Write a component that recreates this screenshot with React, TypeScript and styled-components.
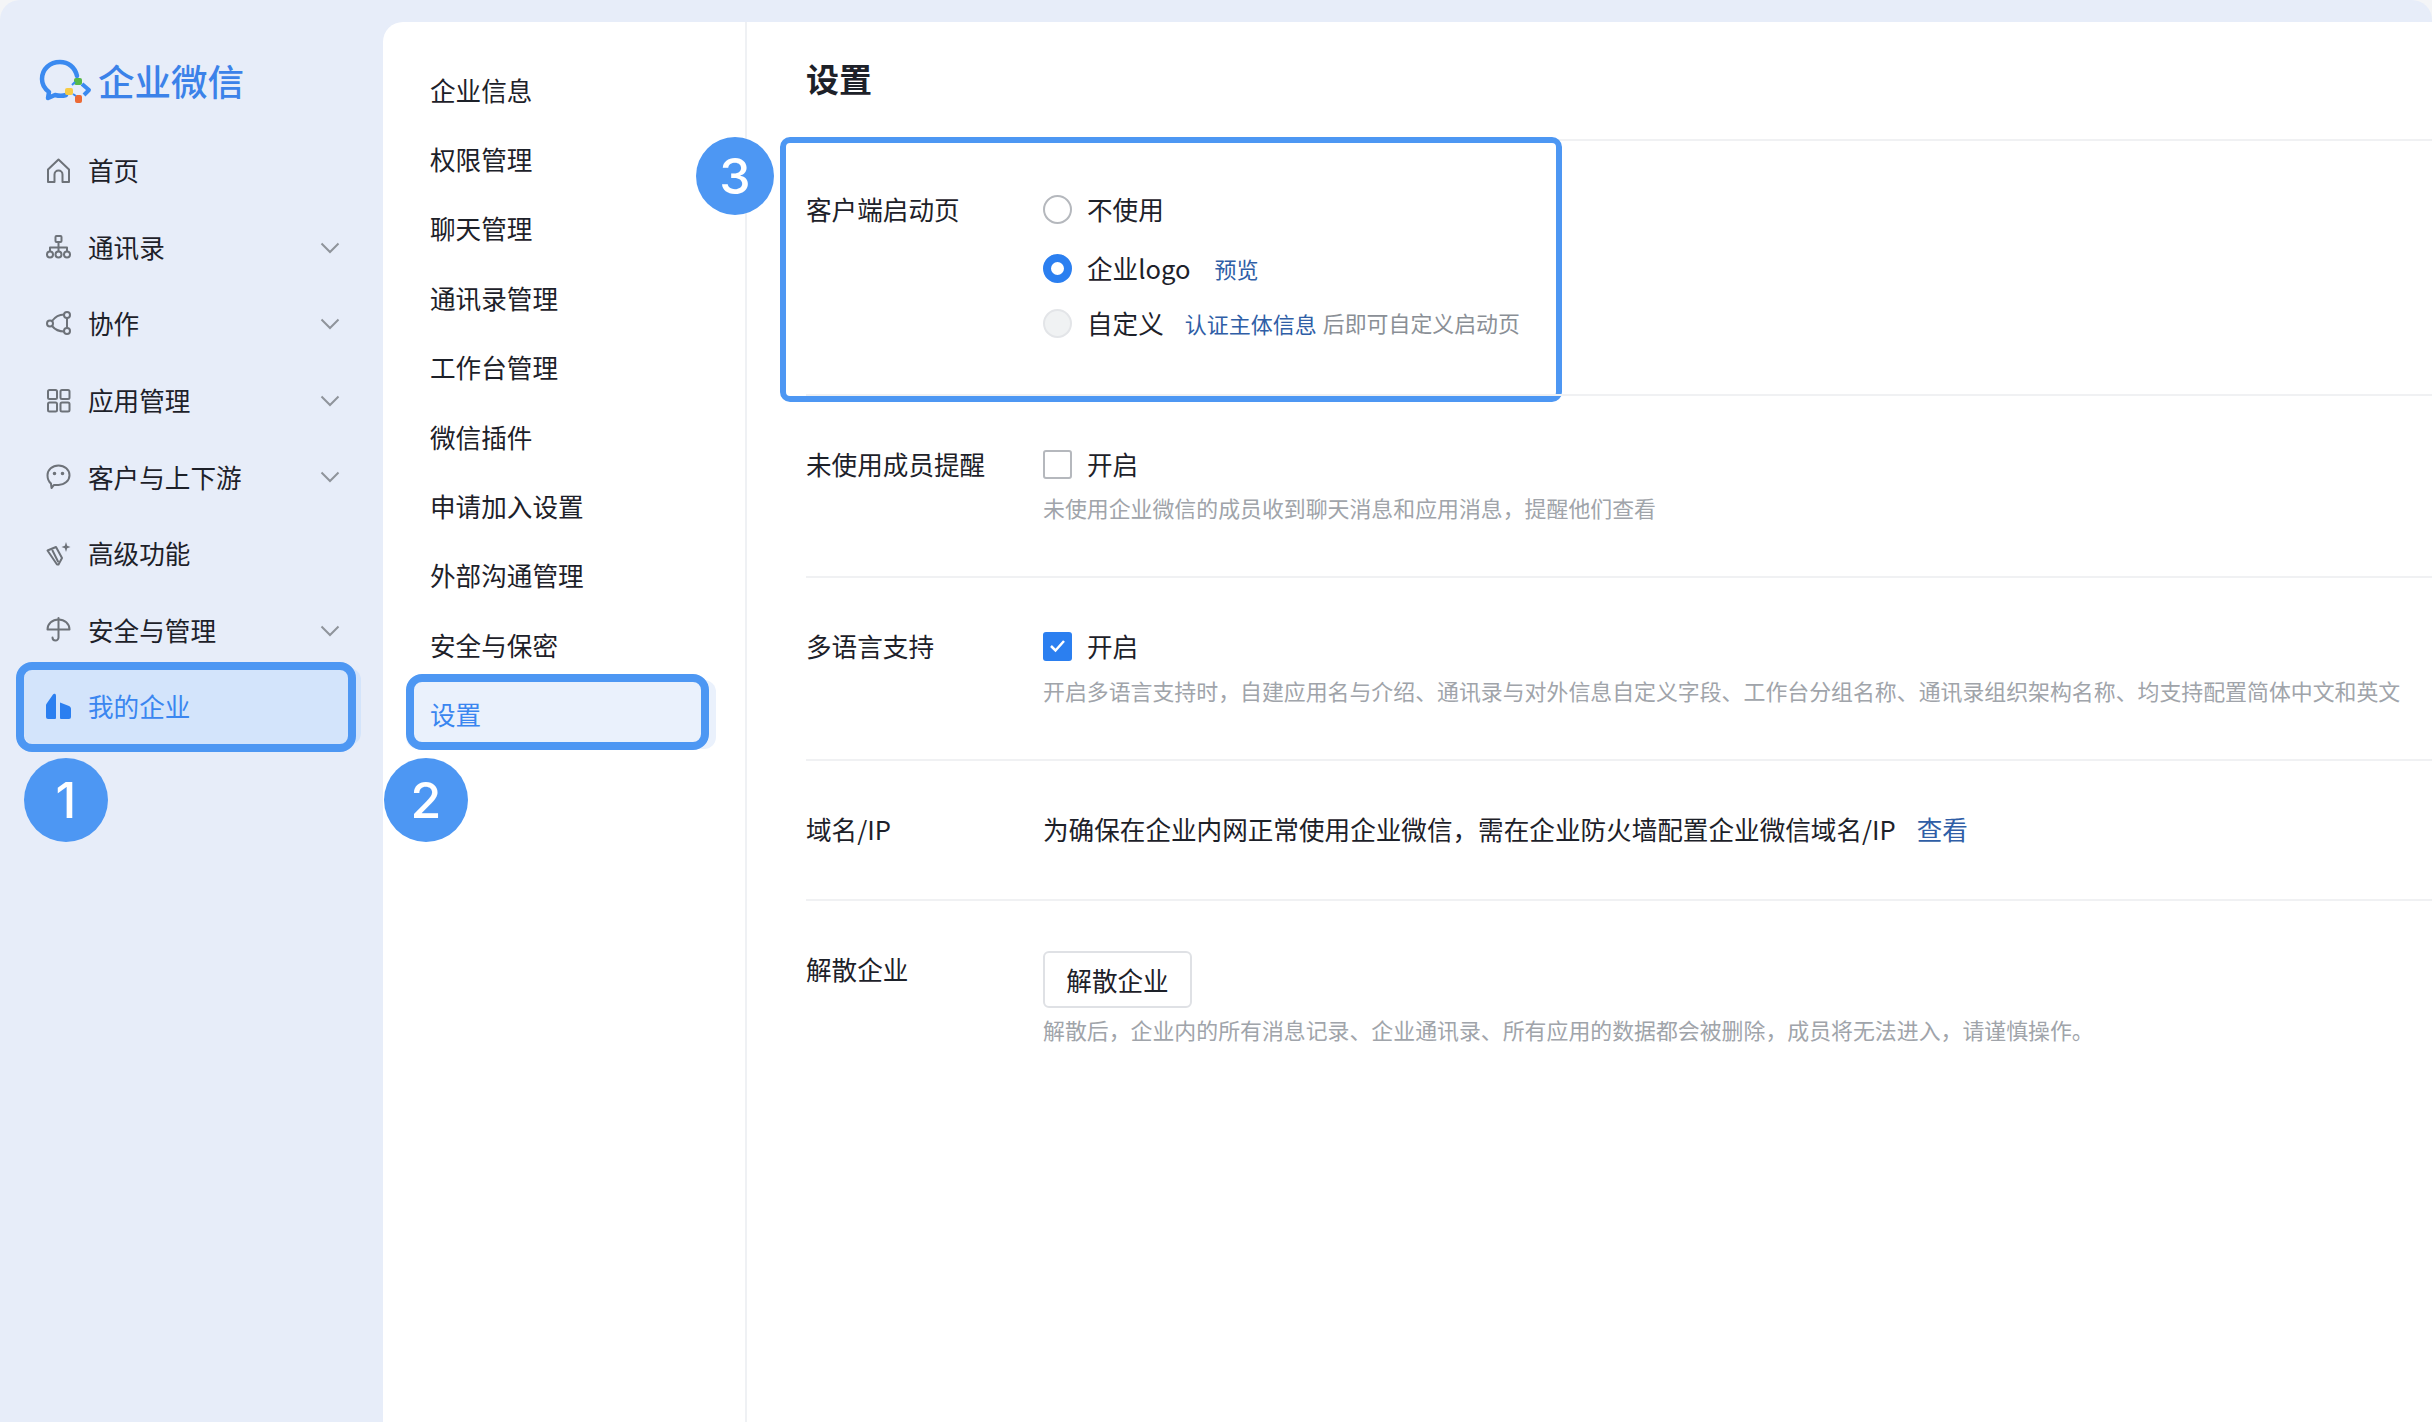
import styled, { createGlobalStyle } from "styled-components";
import { ReactNode } from "react";

const GlobalStyle = createGlobalStyle`
  html, body {
    margin: 0;
    padding: 0;
    background: #f4f5f7;
  }
  * {
    box-sizing: border-box;
  }
`;

const Page = styled.div`
  width: 2432px;
  height: 1422px;
  display: grid;
  grid-template-columns: 383px 1fr;
  background: #e7edf9;
  border-radius: 20px 20px 0 0;
  overflow: hidden;
  font-family: "Noto Sans CJK SC", "Noto Sans", sans-serif;
  color: #1d2129;
`;

const Sidebar = styled.aside`
  display: flex;
  flex-direction: column;
`;

const LogoRow = styled.div`
  height: 132px;
  padding: 30px 0 0 39px;
  display: flex;
  align-items: center;
  gap: 5px;
`;

const LogoText = styled.span`
  font-size: 36.5px;
  font-weight: 500;
  line-height: 1;
  color: #3b82e9;
`;

const NavItem = styled.div<{ $active?: boolean }>`
  position: relative;
  height: 76.6px;
  margin: ${(p) => (p.$active ? "0 22px 0 24px" : "0 22px 0 22px")};
  padding-left: ${(p) => (p.$active ? "22px" : "24px")};
  display: flex;
  align-items: center;
  gap: 17px;
  font-size: 25.6px;
  line-height: 34px;
  border-radius: 12px;
  color: ${(p) => (p.$active ? "#3a86f0" : "#1d2129")};
  background: ${(p) => (p.$active ? "#d3e4fb" : "transparent")};
`;

const Chevron = styled.svg`
  position: absolute;
  right: 21px;
  top: 32px;
`;

const NavHighlight = styled.div`
  position: absolute;
  left: -8px;
  right: 5px;
  top: -6px;
  bottom: -7px;
  border: 8px solid #4d97f3;
  border-radius: 16px;
`;

const Badge = styled.div<{ $size: number; $left: number; $top: number }>`
  position: absolute;
  left: ${(p) => p.$left}px;
  top: ${(p) => p.$top}px;
  width: ${(p) => p.$size}px;
  height: ${(p) => p.$size}px;
  border-radius: 50%;
  background: #4d97f3;
  color: #fff;
  display: flex;
  align-items: center;
  justify-content: center;
  font-family: "Inter", "Liberation Sans", sans-serif;
  font-size: 50px;
  font-weight: 500;
  line-height: 1;
`;

const Panel = styled.div`
  margin-top: 22px;
  display: grid;
  grid-template-columns: 364px 1fr;
  background: #fff;
  border-radius: 20px 0 0 0;
`;

const SubNav = styled.nav`
  padding-top: 33px;
  border-right: 2px solid #eff1f4;
`;

const SubItem = styled.div<{ $active?: boolean }>`
  position: relative;
  height: 69.4px;
  margin: 0 29px 0 23px;
  padding-left: 24px;
  display: flex;
  align-items: center;
  font-size: 25.6px;
  line-height: 34px;
  border-radius: 12px;
  color: ${(p) => (p.$active ? "#3a86f0" : "#1d2129")};
  background: ${(p) => (p.$active ? "#eaf1fc" : "transparent")};
`;

const SubHighlight = styled.div`
  position: absolute;
  left: 0;
  right: 7px;
  top: -6px;
  bottom: -1px;
  border: 8px solid #4d97f3;
  border-radius: 16px;
`;

const Content = styled.main`
  padding-left: 59px;
`;

const Header = styled.header`
  height: 117px;
  padding-bottom: 4px;
  display: flex;
  align-items: center;
  font-size: 33px;
  font-weight: 700;
  line-height: 1;
  color: #1d2129;
`;

const Row = styled.section<{ $height: number }>`
  position: relative;
  height: ${(p) => p.$height}px;
  padding-top: 48px;
  display: grid;
  grid-template-columns: 237px 1fr;
  align-content: start;
  border-top: 2px solid #f0f1f3;
`;

const Label = styled.div`
  font-size: 25.6px;
  line-height: 40px;
  white-space: nowrap;
`;

const Control = styled.div`
  display: flex;
  flex-direction: column;
`;

const OptionLine = styled.div<{ $gap?: number }>`
  height: 40px;
  margin-bottom: ${(p) => p.$gap ?? 0}px;
  display: flex;
  align-items: center;
  font-size: 25.6px;
  line-height: 40px;
  white-space: nowrap;
`;

const Radio = styled.span<{ $state: "off" | "on" | "disabled" }>`
  width: 29px;
  height: 29px;
  margin-right: 15px;
  flex: none;
  border-radius: 50%;
  border: ${(p) =>
    p.$state === "on"
      ? "8px solid #2b7ff0"
      : p.$state === "disabled"
        ? "2px solid #e3e5e8"
        : "2px solid #b5b8bd"};
  background: ${(p) => (p.$state === "disabled" ? "#f0f2f3" : "#fff")};
`;

const CheckBox = styled.span<{ $checked?: boolean }>`
  width: 29px;
  height: 29px;
  margin-right: 15px;
  flex: none;
  display: flex;
  align-items: center;
  justify-content: center;
  border-radius: 3px;
  border: ${(p) => (p.$checked ? "none" : "2px solid #b5b8bd")};
  background: ${(p) => (p.$checked ? "#2b7ff0" : "#fff")};
`;

const InlineLink = styled.span<{ $size?: number; $left?: number }>`
  margin-left: ${(p) => p.$left ?? 21}px;
  font-size: ${(p) => p.$size ?? 22}px;
  color: #2f5ea6;
`;

const MutedNote = styled.span`
  margin-left: 6px;
  font-size: 21.9px;
  color: #8a8f96;
`;

const Hint = styled.div<{ $top?: number }>`
  margin-top: ${(p) => p.$top ?? 9}px;
  font-size: 21.9px;
  line-height: 30px;
  color: #a0a4aa;
  white-space: nowrap;
`;

const Button = styled.button`
  width: 149px;
  height: 57px;
  margin-top: 2px;
  padding: 0;
  border: 2px solid #dfe1e5;
  border-radius: 6px;
  background: #fff;
  font-family: inherit;
  font-size: 25.6px;
  color: #1d2129;
`;

const SettingBox = styled.div`
  position: absolute;
  left: -26px;
  top: -4px;
  width: 782px;
  height: 265px;
  border: 6px solid #4d97f3;
  border-radius: 10px;
`;

const Icon = ({ children }: { children: ReactNode }) => (
  <svg
    width="25"
    height="25"
    viewBox="0 0 25 25"
    fill="none"
    stroke="#6d7279"
    strokeWidth="2"
    strokeLinecap="round"
    strokeLinejoin="round"
    style={{ flex: "none" }}
  >
    {children}
  </svg>
);

const homeIcon = (
  <Icon>
    <path d="M2 11.500 12.500 1.500 23 11.500V24h-6.500v-7.500a4 4 0 0 0-8 0V24H2z" />
  </Icon>
);
const contactsIcon = (
  <Icon>
    <rect x="9.500" y="2" width="6" height="6" rx="1" />
    <path d="M12.500 8v5M4 17v-3.500h17V17M12.500 13v4" />
    <circle cx="4" cy="20.500" r="3" />
    <circle cx="12.500" cy="20.500" r="3" />
    <circle cx="21" cy="20.500" r="3" />
  </Icon>
);
const collabIcon = (
  <Icon>
    <circle cx="21" cy="4" r="3" />
    <circle cx="21" cy="20" r="3" />
    <circle cx="4" cy="12.500" r="3" />
    <path d="M18 3.500c-4.500 0-9 2.500-12 6.500M6 15c3 3.500 7 5.500 12 5.500M21 7v10" />
  </Icon>
);
const gridIcon = (
  <Icon>
    <rect x="2" y="2" width="9" height="9" rx="1.500" />
    <rect x="14.500" y="2" width="9" height="9" rx="1.500" />
    <rect x="2" y="14.500" width="9" height="9" rx="1.500" />
    <rect x="14.500" y="14.500" width="9" height="9" rx="1.500" />
  </Icon>
);
const chatIcon = (
  <Icon>
    <path d="M12.500 1.500c6.100 0 11 4.200 11 9.700s-4.900 9.700-11 9.700H8L5.500 24l-.5-4.400C2.900 17.700 1.500 14.700 1.500 11.200 1.500 5.700 6.400 1.500 12.500 1.500z" />
    <circle cx="8.500" cy="9.500" r=".8" fill="#6d7279" />
    <circle cx="16.500" cy="9.500" r=".8" fill="#6d7279" />
  </Icon>
);
const sparkIcon = (
  <Icon>
    <path d="M1.500 9.500 10 6l6 11-3.500 6.500H11z" />
    <path d="m6.500 9.500 5.500 11" />
    <path
      d="M20 1l1.200 3.800L24.500 6l-3.300 1.200L20 11l-1.200-3.800L15.500 6l3.300-1.200z"
      fill="#6d7279"
      stroke="none"
    />
  </Icon>
);
const umbrellaIcon = (
  <Icon>
    <path d="M1.500 12.500C1.500 6.500 6.500 2.500 12.500 2.500s11 4 11 10z" />
    <path d="M12.500 1v19.500a3 3 0 0 1-6 0" />
  </Icon>
);
const companyIcon = (
  <svg width="25" height="26" viewBox="0 0 25 26" style={{ flex: "none" }}>
    <path
      d="M0 11.500 7 1.500c1-1.300 3-.7 3 1V25a1 1 0 0 1-1 1H2a2 2 0 0 1-2-2z"
      fill="#2b7ff0"
    />
    <path
      d="M14 9.500l9 3.500c1.200.5 2 1.500 2 3v8a2 2 0 0 1-2 2h-8a1 1 0 0 1-1-1z"
      fill="#2b7ff0"
    />
  </svg>
);

const Logo = () => (
  <svg width="54" height="44" viewBox="0 0 54 44">
    <path
      d="M38 17C36 8 29 3 21 3 11 3 3 10 3 20c0 6 3 10 7 13l-1 6 7-3c4 1 8 1 11 0"
      fill="none"
      stroke="#3b8af0"
      strokeWidth="4.500"
      strokeLinecap="round"
      strokeLinejoin="round"
    />
    <rect x="35" y="19" width="8" height="7" rx="2" fill="#57b947" />
    <rect x="26" y="29" width="8" height="7" rx="2" fill="#f7cb45" />
    <rect x="36" y="36" width="7" height="8" rx="2" fill="#ec6a35" />
    <path d="M43 25l7 6-5 5" fill="none" stroke="#3b8af0" strokeWidth="4" strokeLinejoin="round" />
    <path d="M33 26l3-3M34 35l3 2" stroke="#3b8af0" strokeWidth="2" />
  </svg>
);

const navItems = [
  { label: "首页", icon: homeIcon },
  { label: "通讯录", icon: contactsIcon, more: true },
  { label: "协作", icon: collabIcon, more: true },
  { label: "应用管理", icon: gridIcon, more: true },
  { label: "客户与上下游", icon: chatIcon, more: true },
  { label: "高级功能", icon: sparkIcon },
  { label: "安全与管理", icon: umbrellaIcon, more: true },
];

const subItems = [
  "企业信息",
  "权限管理",
  "聊天管理",
  "通讯录管理",
  "工作台管理",
  "微信插件",
  "申请加入设置",
  "外部沟通管理",
  "安全与保密",
];

const App = () => {
  return (
    <Page>
      <GlobalStyle />
      <Sidebar>
        <LogoRow>
          <Logo />
          <LogoText>企业微信</LogoText>
        </LogoRow>
        {navItems.map((item) => (
          <NavItem key={item.label}>
            {item.icon}
            {item.label}
            {item.more && (
              <Chevron width="20" height="14" viewBox="0 0 20 14" fill="none">
                <path d="M1.500 2.500 10 11l8.500-8.500" stroke="#8f949b" strokeWidth="2" />
              </Chevron>
            )}
          </NavItem>
        ))}
        <NavItem $active>
          {companyIcon}
          我的企业
          <NavHighlight>
            <Badge $size={84} $left={0} $top={88}>
              1
            </Badge>
          </NavHighlight>
        </NavItem>
      </Sidebar>
      <Panel>
        <SubNav>
          {subItems.map((item) => (
            <SubItem key={item}>{item}</SubItem>
          ))}
          <SubItem $active>
            设置
            <SubHighlight>
              <Badge $size={84} $left={-30} $top={76}>
                2
              </Badge>
            </SubHighlight>
          </SubItem>
        </SubNav>
        <Content>
          <Header>设置</Header>
          <Row $height={255}>
            <Label>客户端启动页</Label>
            <Control>
              <OptionLine $gap={19}>
                <Radio $state="off" />
                不使用
              </OptionLine>
              <OptionLine $gap={15}>
                <Radio $state="on" />
                企业logo
                <InlineLink $left={24}>预览</InlineLink>
              </OptionLine>
              <OptionLine>
                <Radio $state="disabled" />
                自定义
                <InlineLink>认证主体信息</InlineLink>
                <MutedNote>后即可自定义启动页</MutedNote>
              </OptionLine>
            </Control>
            <SettingBox>
              <Badge $size={78} $left={-90} $top={-6}>
                3
              </Badge>
            </SettingBox>
          </Row>
          <Row $height={182}>
            <Label>未使用成员提醒</Label>
            <Control>
              <OptionLine>
                <CheckBox />
                开启
              </OptionLine>
              <Hint>未使用企业微信的成员收到聊天消息和应用消息，提醒他们查看</Hint>
            </Control>
          </Row>
          <Row $height={183}>
            <Label>多语言支持</Label>
            <Control>
              <OptionLine>
                <CheckBox $checked>
                  <svg width="17" height="14" viewBox="0 0 17 14" fill="none">
                    <path d="M2 7l4.500 4.500L15 2" stroke="#fff" strokeWidth="2.500" />
                  </svg>
                </CheckBox>
                开启
              </OptionLine>
              <Hint $top={10}>
                开启多语言支持时，自建应用名与介绍、通讯录与对外信息自定义字段、工作台分组名称、通讯录组织架构名称、均支持配置简体中文和英文
              </Hint>
            </Control>
          </Row>
          <Row $height={140}>
            <Label>域名/IP</Label>
            <Control>
              <OptionLine>
                为确保在企业内网正常使用企业微信，需在企业防火墙配置企业微信域名/IP
                <InlineLink $size={25.6}>查看</InlineLink>
              </OptionLine>
            </Control>
          </Row>
          <Row $height={240}>
            <Label>解散企业</Label>
            <Control>
              <Button>解散企业</Button>
              <Hint $top={7}>
                解散后，企业内的所有消息记录、企业通讯录、所有应用的数据都会被删除，成员将无法进入，请谨慎操作。
              </Hint>
            </Control>
          </Row>
        </Content>
      </Panel>
    </Page>
  );
};

export default App;
